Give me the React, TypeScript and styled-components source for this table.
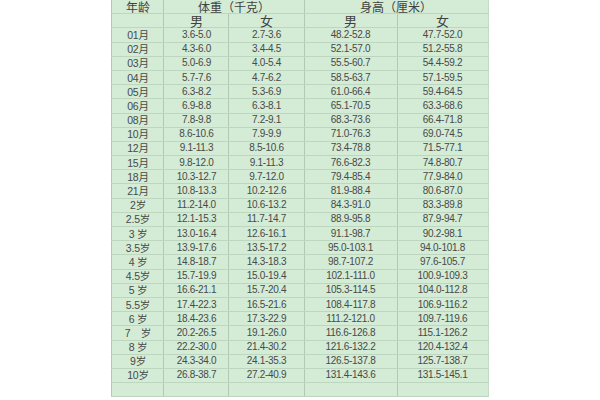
import React from 'react';
import styled, { createGlobalStyle } from 'styled-components';

const GlobalStyle = createGlobalStyle`
    html, body {
        margin:0;
        padding:0;
        background:#ffffff;
    }
    body {
        font-family:"Liberation Sans", Arial, "Noto Sans CJK SC", sans-serif;
    }
`;

type Row = [string, string, string, string, string];

const rows: Row[] = [
    ["01月", "3.6-5.0", "2.7-3.6", "48.2-52.8", "47.7-52.0"],
    ["02月", "4.3-6.0", "3.4-4.5", "52.1-57.0", "51.2-55.8"],
    ["03月", "5.0-6.9", "4.0-5.4", "55.5-60.7", "54.4-59.2"],
    ["04月", "5.7-7.6", "4.7-6.2", "58.5-63.7", "57.1-59.5"],
    ["05月", "6.3-8.2", "5.3-6.9", "61.0-66.4", "59.4-64.5"],
    ["06月", "6.9-8.8", "6.3-8.1", "65.1-70.5", "63.3-68.6"],
    ["08月", "7.8-9.8", "7.2-9.1", "68.3-73.6", "66.4-71.8"],
    ["10月", "8.6-10.6", "7.9-9.9", "71.0-76.3", "69.0-74.5"],
    ["12月", "9.1-11.3", "8.5-10.6", "73.4-78.8", "71.5-77.1"],
    ["15月", "9.8-12.0", "9.1-11.3", "76.6-82.3", "74.8-80.7"],
    ["18月", "10.3-12.7", "9.7-12.0", "79.4-85.4", "77.9-84.0"],
    ["21月", "10.8-13.3", "10.2-12.6", "81.9-88.4", "80.6-87.0"],
    ["2岁", "11.2-14.0", "10.6-13.2", "84.3-91.0", "83.3-89.8"],
    ["2.5岁", "12.1-15.3", "11.7-14.7", "88.9-95.8", "87.9-94.7"],
    ["3 岁", "13.0-16.4", "12.6-16.1", "91.1-98.7", "90.2-98.1"],
    ["3.5岁", "13.9-17.6", "13.5-17.2", "95.0-103.1", "94.0-101.8"],
    ["4 岁", "14.8-18.7", "14.3-18.3", "98.7-107.2", "97.6-105.7"],
    ["4.5岁", "15.7-19.9", "15.0-19.4", "102.1-111.0", "100.9-109.3"],
    ["5 岁", "16.6-21.1", "15.7-20.4", "105.3-114.5", "104.0-112.8"],
    ["5.5岁", "17.4-22.3", "16.5-21.6", "108.4-117.8", "106.9-116.2"],
    ["6 岁", "18.4-23.6", "17.3-22.9", "111.2-121.0", "109.7-119.6"],
    ["7\u3000岁", "20.2-26.5", "19.1-26.0", "116.6-126.8", "115.1-126.2"],
    ["8 岁", "22.2-30.0", "21.4-30.2", "121.6-132.2", "120.4-132.4"],
    ["9岁", "24.3-34.0", "24.1-35.3", "126.5-137.8", "125.7-138.7"],
    ["10岁", "26.8-38.7", "27.2-40.9", "131.4-143.6", "131.5-145.1"],
];

const colWidths = [52, 65, 75, 93, 91];

const App = () => {
    return (
        <Page>
            <GlobalStyle />
            <Sheet>
                <colgroup>
                    {colWidths.map((w, i) => (
                        <col key={i} style={{ width: w }} />
                    ))}
                </colgroup>
                <thead>
                    <tr>
                        <HeadCell>年龄</HeadCell>
                        <HeadCell colSpan={2}>体重（千克）</HeadCell>
                        <HeadCell colSpan={2}>身高（厘米）</HeadCell>
                    </tr>
                    <tr>
                        <HeadCell />
                        <HeadCell big>男</HeadCell>
                        <HeadCell big>女</HeadCell>
                        <HeadCell big>男</HeadCell>
                        <HeadCell big>女</HeadCell>
                    </tr>
                </thead>
                <tbody>
                    {rows.map((r) => (
                        <tr key={r[0]}>
                            <AgeCell>{r[0]}</AgeCell>
                            <Cell>{r[1]}</Cell>
                            <Cell>{r[2]}</Cell>
                            <Cell>{r[3]}</Cell>
                            <Cell>{r[4]}</Cell>
                        </tr>
                    ))}
                    <tr>
                        <Cell />
                        <Cell />
                        <Cell />
                        <Cell />
                        <Cell />
                    </tr>
                </tbody>
            </Sheet>
        </Page>
    );
};

export const Page = styled.div`
    width:600px;
    height:400px;
    display:flex;
    justify-content:center;
    align-items:flex-start;
    overflow:hidden;
`;

export const Sheet = styled.table`
    width:376px;
    table-layout:fixed;
    border-collapse:collapse;
    background:#d4ebd6;
    border-left:1px solid #97a99a;
    border-right:1px solid #c5dcc7;
    color:#474a48;
`;

export const Cell = styled.td`
    height:13.2px;
    padding:0;
    text-align:center;
    font-size:10px;
    line-height:12px;
    letter-spacing:-0.3px;
    border-bottom:1px solid #bdd6c0;
    border-left:1px solid #b4c7b6;
    white-space:pre;
    overflow:hidden;
`;

export const AgeCell = styled(Cell)`
    font-size:10.5px;
    letter-spacing:-0.2px;
`;

export const HeadCell = styled.th<{ big?: boolean }>`
    height:13.2px;
    padding:0;
    text-align:center;
    font-weight:normal;
    font-size:${(p) => (p.big ? '13px' : '12px')};
    line-height:12px;
    color:#3f4240;
    border-bottom:1px solid #bdd6c0;
    border-left:1px solid #b4c7b6;
    font-family:"Noto Sans CJK SC", "Liberation Sans", sans-serif;
`;

export default App;
